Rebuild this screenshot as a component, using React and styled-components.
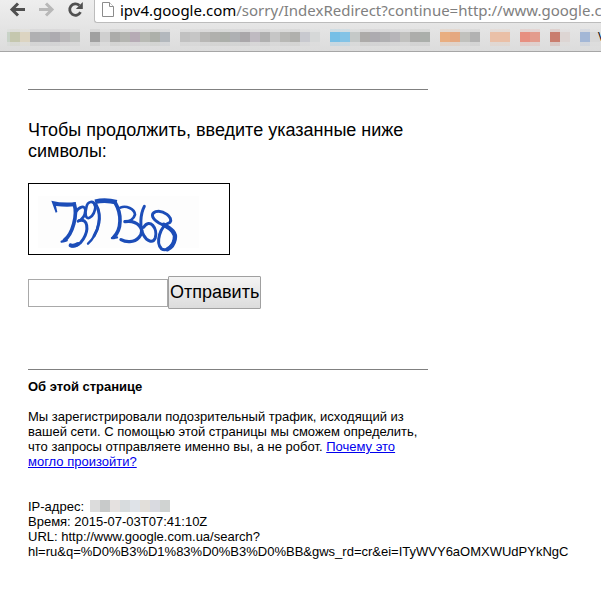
import React, { useState } from "react";
import styled, { createGlobalStyle } from "styled-components";

const GlobalStyle = createGlobalStyle`
  body {
    margin: 0;
    background: #fff;
    color: #000;
    font-family: "Liberation Sans", Arial, sans-serif;
    overflow-x: hidden;
  }
`;

const Browser = styled.header`
  background: linear-gradient(#eeeeee, #dcdcdc);
  border-bottom: 1px solid #a6a6a6;
  overflow: hidden;
`;

const Toolbar = styled.div`
  display: flex;
  height: 23px;
`;

const Nav = styled.nav`
  display: flex;
  flex: none;
  padding: 0 3px 0 4px;
`;

const NavButton = styled.button`
  flex: none;
  width: 29px;
  height: 20px;
  padding: 0;
  border: 0;
  background: none;
  color: ${({ $muted }) => ($muted ? "#b8b8b8" : "#505050")};

  svg {
    display: block;
  }
`;

const AddressBar = styled.div`
  display: flex;
  flex: 1;
  min-width: 0;
  gap: 6px;
  padding-left: 7px;
  border: solid #bcbcbc;
  border-width: 0 0 1px 1px;
  border-bottom-left-radius: 3px;
  background: #fff;
  overflow: hidden;

  svg {
    flex: none;
  }
`;

const Address = styled.div`
  font: 15px/20px "Noto Sans", "Open Sans", sans-serif;
  color: #808080;
  white-space: nowrap;

  b {
    font-weight: 400;
    color: #000;
  }
`;

const Bookmarks = styled.div`
  display: flex;
  align-items: center;
  height: 28px;
  padding-left: 7px;
`;

const Tile = styled.span`
  flex: none;
  width: ${({ $narrow }) => ($narrow ? 3 : 10)}px;
  height: 10px;
  background: ${({ $color }) => $color || "transparent"};
  box-shadow: ${({ $color }) =>
    $color ? `0 -3px 0 ${$color}30, 0 4px 0 ${$color}38` : "none"};
`;

const BookmarkLabel = styled.span`
  flex: none;
  margin-left: -2px;
  font: 12px/16px "Open Sans", sans-serif;
`;

const Page = styled.main`
  padding: 37px 28px 0;
`;

const Column = styled.div`
  max-width: 400px;
`;

const Rule = styled.hr`
  margin: 0;
  border: 0;
  border-top: 1px solid #808080;
`;

const Prompt = styled.label`
  display: block;
  margin: 30px 0 21px;
  font-size: 18px;
  line-height: 21px;
`;

const Captcha = styled.svg`
  display: block;
  border: 1px solid #000;
`;

const AnswerRow = styled.div`
  display: flex;
  align-items: center;
  margin: 21px 0 60px;
`;

const Answer = styled.input`
  box-sizing: border-box;
  width: 140px;
  height: 28px;
  padding: 2px;
  border: 1px solid #a9a9a9;
  font: 18px "Liberation Sans", Arial, sans-serif;
`;

const Submit = styled.button`
  height: 33px;
  padding: 0 1px;
  border: 1px solid #a0a0a0;
  border-radius: 1px;
  background: linear-gradient(#f4f4f4, #dcdcdc);
  color: #000;
  font: 18px "Liberation Sans", Arial, sans-serif;
`;

const About = styled.section`
  font-size: 13px;
  line-height: 15px;
`;

const AboutTitle = styled.h2`
  margin: 9px 0 15px;
  font-size: 13px;
  line-height: 15px;
`;

const Text = styled.p`
  margin: 0 0 30px;
`;

const Link = styled.a`
  color: #0000ee;
`;

const HiddenIp = styled.span`
  display: inline-flex;
  vertical-align: -1px;
  margin-left: 2px;
`;

const IpTile = styled.span`
  width: 10px;
  height: 12px;
  background: ${({ $color }) => $color};
`;

const bookmarkColors = [
  "#c5c7ae", "#dcd4c1", "#b0b0b2", "#b1b3b5", "#adabb0", "#b9b7b9", "#bfc1bf", "", "#a0a0a0", "#cfcfcf",
  "#acacaa", "#b4b5b1", "#b6abb5", "#b8bab4", "#adb0aa", "#b3b8bd", "", "#c1c1c1", "#c6c6c6", "#b8b7b5",
  "#b0b0ad", "#acafaa", "#aeb0b3", "#aaa7aa", "#bfbac1", "#b0b0b0", "#c6c6c6", "#b8b8b5", "#b0b0ad", "#c8c9cf",
  "#d6d8d8", "", "#76bfe6", "#83c3e6", "#c5c9c8", "#adaba9", "#adabb0", "#b0b0b2", "#b7b5b9", "#c1c1bf",
  "#adadab", "#abafab", "", "#e9ae80", "#e5a880", "#c1c1bd", "#b2b2b2", "", "#eac0a8", "#eabfa6",
  "", "#e78f80", "#e39c8d", "", "#c97d6e", "#ddd5d3", "", "#a3b7d6", "#d8d8d8",
];

const ipColors = ["#dcdcdc", "#c8caca", "#e5e1e0", "#d8dcde", "#dfe3e8", "#e2dfda", "#d9dae0", "#d0d3d2"];

const ArrowIcon = ({ flip }) => (
  <svg width="29" height="20" fill="none" stroke="currentColor" strokeWidth="3">
    <path
      d={flip ? "M6 9.5H19M13 3.5L19 9.5L13 15.5" : "M21 9.5H8M14 3.5L8 9.5L14 15.5"}
    />
  </svg>
);

const ReloadIcon = () => (
  <svg width="29" height="20" fill="none" stroke="currentColor" strokeWidth="2.8">
    <path d="M18.5 12.2A5.7 5.7 0 1 1 17.3 5.4" />
    <path d="M20.8 2V9H13.8Z" fill="currentColor" stroke="none" />
  </svg>
);

const PageIcon = () => (
  <svg width="12" height="19" fill="#fff" stroke="#8c8c8c">
    <path d="M.5 2.5H7.5L11.5 6.5V16.5H.5Z" />
    <path d="M7.5 2.5V6.5H11.5" />
  </svg>
);

const CaptchaImage = () => (
  <Captcha width="200" height="70" viewBox="27 27 600 210" role="img" aria-label="739 7368">
    <path d="M55 62H537V220H55Z" fill="#fdfdfd" />
    <g fill="none" stroke="#1c4db8" strokeWidth="11" strokeLinecap="round" strokeLinejoin="round">
      <path d="M94 77Q130 86 168 81L165 94Q138 97 108 93L112 111L107 113Z" fill="#1c4db8" stroke="none" />
      <path d="M163 88C173 120 158 178 133 196" />
      <path d="M125 200L140 196" strokeWidth="7" />
      <path d="M168 111C175 96 196 88 196 107C195 124 184 135 174 139" strokeWidth="8" />
      <path d="M177 137C204 128 207 165 190 192C180 210 162 216 151 211" strokeWidth="9" />
      <path d="M152 211C160 214 168 211 174 207" strokeWidth="12" />
      <path d="M225 93C222 75 202 77 199 98C193 118 198 134 209 128C220 122 226 106 227 88" strokeWidth="8" />
      <path d="M229 88C247 121 236 177 204 206" strokeWidth="7" />
      <path d="M233 100C243 126 237 159 222 183" strokeWidth="9" />
      <path d="M225 80Q258 73 290 82" strokeWidth="14" strokeLinecap="butt" />
      <path d="M286 84C305 116 306 163 281 187" />
      <path d="M276 189L291 187" strokeWidth="7" />
      <path d="M301 98C318 90 344 102 345 119C342 132 326 142 315 140" strokeWidth="8" />
      <path d="M315 140C350 134 380 162 357 187C342 204 317 202 303 194" strokeWidth="10" />
      <path d="M373 94C361 117 358 157 371 181C380 198 399 207 406 188C414 161 389 127 371 157" strokeWidth="9" />
      <path d="M450 142C461 128 429 103 407 110C390 117 397 132 417 144C443 156 473 170 464 195C455 222 435 229 424 221C407 204 418 153 450 142" strokeWidth="9" />
      <path d="M431 149C454 162 469 174 464 193C461 210 450 219 442 223" strokeWidth="13" />
    </g>
  </Captcha>
);

const App = () => {
  const [answer, setAnswer] = useState("");

  return (
    <>
      <GlobalStyle />
      <Browser>
        <Toolbar>
          <Nav>
            <NavButton type="button" aria-label="Назад">
              <ArrowIcon />
            </NavButton>
            <NavButton type="button" aria-label="Вперед" $muted>
              <ArrowIcon flip />
            </NavButton>
            <NavButton type="button" aria-label="Обновить">
              <ReloadIcon />
            </NavButton>
          </Nav>
          <AddressBar>
            <PageIcon />
            <Address>
              <b>ipv4.google.com</b>/sorry/IndexRedirect?continue=http://www.google.c
            </Address>
          </AddressBar>
        </Toolbar>
        <Bookmarks>
          <Tile $narrow $color="#c9d3c8" />
          {bookmarkColors.map((color, i) => (
            <Tile key={i} $color={color} />
          ))}
          <BookmarkLabel>V</BookmarkLabel>
        </Bookmarks>
      </Browser>
      <Page>
        <Column>
          <Rule />
          <form onSubmit={(e) => e.preventDefault()}>
            <Prompt htmlFor="answer">
              Чтобы продолжить, введите указанные ниже символы:
            </Prompt>
            <CaptchaImage />
            <AnswerRow>
              <Answer
                id="answer"
                value={answer}
                onChange={(e) => setAnswer(e.target.value)}
              />
              <Submit type="submit">Отправить</Submit>
            </AnswerRow>
          </form>
          <Rule />
          <About>
            <AboutTitle>Об этой странице</AboutTitle>
            <Text>
              Мы зарегистрировали подозрительный трафик, исходящий из вашей
              сети. С помощью этой страницы мы сможем определить, что запросы
              отправляете именно вы, а не робот.{" "}
              <Link href="#why">Почему это могло произойти?</Link>
            </Text>
            <Text>
              IP-адрес:{" "}
              <HiddenIp>
                {ipColors.map((color) => (
                  <IpTile key={color} $color={color} />
                ))}
              </HiddenIp>
              <br />
              Время: 2015-07-03T07:41:10Z
              <br />
              URL: http://www.google.com.ua/search?
              <br />
              hl=ru&q=%D0%B3%D1%83%D0%B3%D0%BB&gws_rd=cr&ei=ITyWVY6aOMXWUdPYkNgC
            </Text>
          </About>
        </Column>
      </Page>
    </>
  );
};

export default App;
